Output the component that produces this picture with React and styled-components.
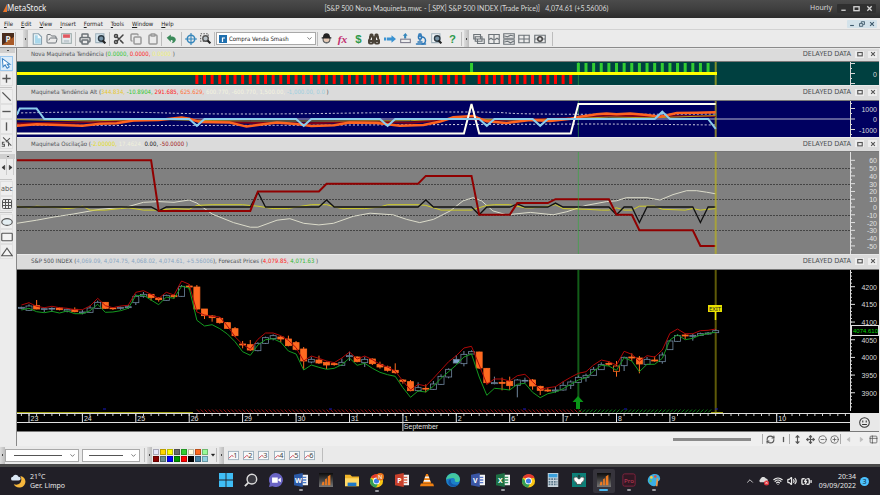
import React from "react";
import styled, { createGlobalStyle } from "styled-components";
import {
  Binoculars, ChevronDown, ChevronUp, Clipboard, Copy, FolderOpen, Grid3x3,
  Microscope, Move, MoveVertical, Printer, RefreshCw, Scissors,
  Volume2, Wifi, BatteryCharging, CirclePlus, CircleMinus, Table2,
} from "lucide-react";

/* ---------- data ---------- */

const STEP = 7.63;
const bx = (i) => 12 + i * STEP;
const range = (from, to) => Array.from({ length: to - from + 1 }, (_, k) => from + k);
const toPath = (pts, y) =>
  pts.map(([i, v], k) => `${k ? "L" : "M"}${bx(i).toFixed(1)} ${y(v).toFixed(1)}`).join("");

const oscMain = [[-1.6, 60], [16, 60], [17, -5], [29, -5], [30, 20], [38, 20], [39, 30], [51, 30], [52, 40], [58, 40], [59, -10], [63, -10], [64, 5], [68, 5], [69, 10], [76, 10], [77, -10], [79, -10], [80, -30], [87, -30], [88, -50], [90, -50]];
const oscBlack = [[-1.6, 0], [16, 0], [17, -5], [18, 0], [29, 0], [30, 19], [31, 0], [38, 0], [39, 9], [40, 0], [51, 0], [52, 9], [53, 0], [58, 0], [59, -10], [60, 0], [63, 0], [64, 4], [65, 0], [68, 0], [69, 5], [70, 0], [76, 0], [77, -10], [78, 0], [79, 0], [80, -20], [81, 0], [87, 0], [88, -20], [89, 0], [90, 0]];
const oscYellow = [[-1.6, 1], [0, -1], [1, 1], [4, -1], [5, -2], [6, -1], [7, 1], [8, -4], [10, -4], [12, -2], [13, -1], [15, -4], [17, -4], [19, -2], [21, -3], [22, 2], [24, 3], [28, 3], [30, 1], [32, -2], [34, -2], [35, 0], [37, 3], [39, 3], [41, -2], [44, -2], [46, 0], [47, 3], [51, 3], [52, 2], [54, -4], [58, -4], [60, 2], [61, 3], [63, 3], [65, -1], [66, -1], [68, 1], [69, 3], [70, -2], [73, -3], [75, -4], [76, -4], [77, -1], [78, -4], [79, -4], [80, 1], [82, 1], [83, -3], [86, -4], [87, -2], [88, -4], [90, -2]];
const oscPale = [[-1.6, -21], [1, -17], [3.2, -13], [5.8, -9], [9.3, -3], [12.8, 0], [15, 6], [17, 7], [19, 6], [21, 9], [22, 5], [24, -9], [26.8, -20], [29, -26], [30, -26], [32.5, -17], [34.2, -15], [36, -21], [38, -23], [39.9, -21], [42.5, -12], [44.7, -8], [47.7, -10], [49.5, -16], [51.2, -20], [53, -16], [55.2, -5], [56.9, 8], [58.2, 12], [59.3, 8], [60.8, -5], [62.6, -10], [65.7, -7], [68.7, -10], [70.5, -6], [73, 2], [75.7, 7], [77, 8], [78.3, 12], [81, 12], [82.7, 9], [84.4, 16], [86.2, 21], [87.5, 21], [88.8, 19], [90, 17]];

const altWhite = [[-1.6, -1400], [57, -1400], [58, 1450], [59, -1400], [71, -1400], [72, 1450], [90, 1450]];
const altCyan = [[-1.6, 400], [-1.2, 1000], [1, 1000], [2, 0], [21, 0], [22, -650], [23, 0], [35, 0], [36, -650], [37, 0], [46, 0], [47, -650], [48, 0], [59, 0], [60, -650], [61, 0], [66, 0], [67, -650], [68, 0], [82, 0], [83, 700], [84, 0], [89, 0], [90, -950]];
const altOrange = [[-1.6, -650], [1, -500], [5, -600], [7, -640], [9.3, -450], [11.5, -400], [13.7, -150], [17, -100], [20, 150], [21, 30], [22.4, -300], [26.3, -350], [28.5, -730], [30.7, -500], [32.5, -350], [35, -480], [37, -680], [40, -600], [42, -350], [45.6, -380], [48.6, -640], [51.7, -570], [53.9, -250], [55.6, 160], [58.2, 290], [60, -220], [62.6, -380], [65.7, -100], [68.3, -190], [71, 30], [72.2, 220], [74.4, 450], [75.7, 540], [77, 460], [78.8, 540], [81, 380], [82.7, 220], [84.9, 570], [87.5, 600], [90, 640]];
const altMaroon = [[-1.6, -420], [6, -330], [12, -200], [20, 60], [23, -180], [28, -350], [36, -420], [44, -220], [50, -370], [56, 60], [60, -100], [66, -50], [72, 100], [76, 320], [80, 300], [85, 260], [90, 280]];
const altOlive = [[-1.6, -60], [8, -180], [16, -30], [24, -160], [29, -190], [40, -190], [50, -160], [56, 40], [64, -100], [70, 20], [76, 180], [82, 120], [90, 330]];

// [bar, top, bottom, high, low] on a grid of thirds of a pixel; "u" hollow, "d" filled, "b" blue filled, "o" orange hollow
const candles = [
  [-1, 157, 160, 155, 163, "u"], [0, 153, 166, 148, 168, "u"], [1, 152, 162, 135, 163, "d"], [2, 161, 163, 158, 171, "u"], [3, 160, 162, 157, 171, "u"],
  [4, 159, 164, 157, 166, "d"], [5, 163, 168, 160, 172, "u"], [6, 163, 170, 157, 172, "d"], [7, 171, 174, 165, 178, "u"], [8, 159, 172, 152, 173, "u"],
  [9, 142, 160, 137, 161, "u"], [10, 142, 160, 141, 162, "d"], [11, 159, 161, 156, 165, "d"], [12, 157, 160, 155, 164, "u"], [13, 155, 158, 150, 162, "u"],
  [14, 124, 143, 118, 150, "u"], [15, 118, 124, 111, 128, "u"], [16, 118, 128, 117, 137, "d"], [17, 129, 134, 127, 140, "d"], [18, 121, 136, 119, 137, "u"],
  [19, 122, 125, 118, 131, "d"], [20, 94, 124, 90, 125, "u"], [21, 93, 96, 88, 104, "d"], [22, 96, 162, 90, 166, "d"], [23, 162, 182, 162, 192, "d"],
  [24, 183, 188, 180, 200, "d"], [25, 190, 203, 186, 206, "d"], [26, 203, 220, 201, 222, "d"], [27, 221, 242, 216, 246, "d"], [28, 267, 270, 258, 280, "d"],
  [29, 269, 285, 255, 288, "d"], [30, 265, 287, 262, 289, "u"], [31, 248, 265, 245, 267, "u"], [32, 242, 251, 238, 256, "u"], [33, 246, 252, 243, 262, "d"],
  [34, 252, 272, 242, 274, "d"], [35, 263, 283, 258, 286, "d"], [36, 282, 318, 276, 345, "d"], [37, 313, 321, 305, 325, "u"], [38, 315, 324, 302, 327, "d"],
  [39, 322, 330, 320, 342, "d"], [40, 326, 329, 322, 332, "d"], [41, 322, 331, 310, 333, "u"], [42, 302, 305, 290, 318, "u"], [43, 306, 320, 304, 322, "d"],
  [44, 313, 323, 305, 336, "u"], [45, 312, 326, 310, 330, "d"], [46, 328, 336, 320, 341, "d"], [47, 336, 346, 332, 350, "d"], [48, 346, 353, 325, 356, "d"],
  [49, 375, 379, 372, 386, "d"], [50, 380, 407, 375, 409, "d"], [51, 398, 407, 382, 410, "u"], [52, 400, 402, 388, 412, "d"], [53, 387, 403, 378, 405, "u"],
  [54, 364, 388, 358, 390, "u"], [55, 343, 366, 340, 370, "u"], [56, 313, 324, 300, 325, "b"], [57, 298, 326, 288, 334, "u"], [58, 290, 297, 286, 298, "u"],
  [59, 291, 339, 290, 342, "d"], [60, 340, 383, 339, 388, "d"], [61, 383, 386, 365, 388, "u"], [62, 382, 385, 368, 406, "d"], [63, 379, 392, 365, 405, "d"],
  [64, 375, 391, 372, 427, "u"], [65, 376, 378, 368, 385, "u"], [66, 375, 393, 372, 404, "d"], [67, 394, 406, 392, 420, "d"], [68, 405, 408, 398, 411, "d"],
  [69, 405, 408, 395, 413, "u"], [70, 391, 405, 380, 407, "u"], [71, 381, 391, 376, 402, "u"], [72, 367, 382, 362, 384, "u"], [73, 361, 367, 356, 380, "u"],
  [74, 343, 361, 336, 362, "u"], [75, 329, 344, 322, 345, "u"], [76, 325, 328, 318, 333, "d"], [77, 333, 349, 318, 365, "o"], [78, 307, 332, 305, 348, "u"],
  [79, 306, 309, 295, 318, "d"], [80, 309, 327, 303, 355, "d"], [81, 313, 328, 306, 330, "u"], [82, 315, 318, 304, 320, "d"], [83, 300, 320, 292, 326, "u"],
  [84, 258, 284, 255, 285, "u"], [85, 242, 259, 238, 260, "u"], [86, 240, 243, 236, 252, "d"], [87, 241, 244, 236, 257, "u"], [88, 236, 241, 233, 243, "u"],
  [89, 234, 237, 231, 239, "u"], [90, 227, 233, 222, 234, "u"],
];
// one value per bar, from bar -1 to bar 90
const highBand = [150, 143, 154, 158, 154, 158, 160, 164, 164, 153, 130, 152, 158, 153, 151, 112, 107, 118, 130, 112, 120, 78, 88, 171, 180, 184, 186, 213, 245, 268, 283, 253, 234, 234, 242, 256, 278, 318, 303, 310, 318, 323, 309, 291, 312, 303, 314, 328, 336, 348, 378, 405, 388, 393, 370, 345, 320, 302, 279, 274, 330, 388, 372, 372, 378, 362, 358, 380, 403, 398, 395, 380, 367, 355, 350, 330, 315, 320, 330, 289, 298, 318, 302, 306, 285, 235, 222, 236, 236, 227, 226, 222];
const lowBand = [165, 160, 170, 173, 169, 174, 168, 176, 176, 167, 148, 172, 171, 167, 160, 122, 121, 135, 149, 126, 130, 94, 99, 196, 213, 209, 221, 237, 260, 290, 301, 270, 254, 251, 262, 288, 297, 345, 330, 337, 343, 340, 329, 309, 331, 325, 340, 352, 359, 364, 398, 427, 408, 411, 394, 370, 350, 330, 306, 297, 366, 421, 400, 402, 405, 388, 385, 412, 428, 416, 411, 401, 388, 375, 368, 349, 331, 333, 346, 308, 318, 350, 328, 328, 310, 255, 239, 254, 250, 240, 236, 231];

const days = [[0, "23"], [7, "24"], [14, "25"], [21, "26"], [28, "29"], [35, "30"], [42, "31"], [49, "1"], [56, "2"], [63, "6"], [70, "7"], [77, "8"], [84, "9"], [98, "10"]];
const swatches = ["#e6e6fa", "#ffd700", "#ffff00", "#696969", "#32cd32", "#fffde0", "#ff6a1e", "#98fb98", "#8b0000", "#6b8e8e", "#0000ff", "#009900", "#ff0000", "#000000", "#4682a4", "#8fd0e0"];

/* ---------- styles ---------- */

const compact = `
  font-family: "DejaVu Sans Condensed", "DejaVu Sans", sans-serif;
  font-size: 6px;
`;

const GlobalStyle = createGlobalStyle`
  * { box-sizing: border-box; }
  body {
    margin: 0;
    background: #211f27;
    font-family: "Noto Sans", "Open Sans", sans-serif;
    font-size: 7px;
    line-height: 10px;
    color: #222;
  }
  button, select { font: inherit; color: inherit; margin: 0; }
  button { padding: 0; border: 0; background: none; }
  svg { display: block; flex: none; }
`;

const Page = styled.div`
  min-height: 100vh;
  display: flex;
  flex-direction: column;
  background: #ebebeb;
`;

const TitleBar = styled.header`
  height: 18px;
  padding: 0 4px 2px 3px;
  display: grid;
  grid-template-columns: 1fr auto 1fr;
  align-items: center;
  background: linear-gradient(#4b4b4b, #3f3f3f 50%, #2b2b2b);
  color: #d8d8d8;
`;

const Brand = styled.h1`
  margin: 0;
  display: flex;
  align-items: center;
  font-size: 8px;
  font-weight: 400;
  color: #efefef;
`;

const DocTitle = styled.span`
  padding-left: 54px;
  white-space: pre;
  font-family: Lato, sans-serif;
`;

const TitleRight = styled.div`
  display: flex;
  justify-content: flex-end;
  align-items: center;
  gap: 5px;
`;

const WinButtons = styled.div`
  display: flex;
  background: ${(p) => (p.$light ? "#d3e2ea" : "#303030")};
  color: ${(p) => (p.$light ? "#3f5a6c" : "#d6d6d6")};
  border-radius: 1px;
`;

const WinButton = styled.button`
  width: ${(p) => (p.$small ? 10 : 13)}px;
  height: ${(p) => (p.$small ? 8 : 9)}px;
  display: grid;
  place-items: center;
`;

const MenuBar = styled.nav`
  height: 12px;
  padding: 0 3px 0 4px;
  display: flex;
  align-items: center;
  gap: 8px;
  border-bottom: 1px solid #d2d2d2;
  color: #222;
  ${compact}
`;

const MenuItem = styled.button`
  &::first-letter { text-decoration: underline; }
`;

const Grow = styled.div`
  flex: 1;
`;

const Toolbar = styled.div`
  height: 18px;
  display: flex;
  align-items: center;
  border-bottom: 1px solid #8b8b8b;
`;

const Group = styled.div`
  width: ${(p) => p.$w}px;
  height: 14px;
  padding: 0 1px;
  display: flex;
  align-items: center;
  justify-content: ${(p) => (p.$center ? "center" : "space-between")};
  border-left: 1px solid ${(p) => (p.$bare ? "transparent" : "#bdbdbd")};
`;

const Grip = styled.div`
  width: 5px;
  height: 17px;
  background: linear-gradient(90deg, #dcdcdc, #bcbcbc);
  display: grid;
  place-items: center;
  &::after { content: ""; width: 1px; height: 2px; background: #444; }
`;

const ToolButton = styled.button`
  width: 15px;
  height: 14px;
  display: grid;
  place-items: center;
  color: ${(p) => p.$color || "#6c7378"};
`;

const SelectBox = styled.label`
  width: ${(p) => p.$w}px;
  height: 13px;
  display: grid;
  align-items: center;
  background: #fff;
  border: 1px solid #a9a9a9;
  color: #222;
  ${compact}
  > * { grid-area: 1 / 1; }
  > svg { pointer-events: none; margin-left: 2px; }
  > svg:last-child { justify-self: end; margin: 0 2px; }
`;

const Select = styled.select`
  width: 100%;
  height: 11px;
  padding: 0 0 0 ${(p) => p.$pad || 2}px;
  border: 0;
  background: transparent;
  appearance: none;
  line-height: 11px;
`;

const Workspace = styled.div`
  display: flex;
  flex: 1;
`;

const SideBar = styled.aside`
  width: 17px;
  flex: none;
  display: flex;
  flex-direction: column;
  align-items: flex-start;
  border-right: 1px solid #888;
  background: #ececec;
`;

const SideTool = styled.button`
  width: 13px;
  height: 15px;
  border: 1px solid ${(p) => (p.$active ? "#9cc8ee" : "#e0e0e0")};
  background: ${(p) => (p.$active ? "#dcecfa" : "#efefef")};
  display: grid;
  place-items: center;
  color: #555;
`;

const SideGrip = styled.div`
  width: 15px;
  height: 5px;
  margin-bottom: ${(p) => p.$gap || 0}px;
  background: #cfcfcf;
  display: grid;
  place-items: center;
  &::after { content: ""; width: 2px; height: 1px; background: #555; }
`;

const SideRule = styled.div`
  width: 12px;
  height: 1px;
  margin: ${(p) => p.$m}px 0;
  background: #c4c4c4;
`;

const Arrows = styled.div`
  display: flex;
  height: 16px;
  margin-bottom: 3px;
  button { width: 7px; display: grid; place-items: center; border-right: 1px solid #ccc; }
`;

const Main = styled.main`
  flex: 1;
  min-width: 0;
  padding-right: 1px;
`;

const PaneHead = styled.div`
  height: ${(p) => p.$h}px;
  padding: 0 2px 2px 14px;
  display: flex;
  align-items: center;
  background: #dbdbdb;
  border-bottom: 1px solid #777;
  border-top: 1px solid #e8e8e8;
  color: #4c5054;
`;

const PaneTitle = styled.h2`
  flex: 1;
  margin: 0;
  font-weight: 400;
  white-space: pre;
  ${compact}
`;

const Value = styled.span`
  color: ${(p) => p.$c};
`;

const Delayed = styled.span`
  margin-right: 4px;
`;

const PaneButton = styled.button`
  width: 9px;
  height: 7px;
  margin-left: ${(p) => (p.$gap ? 4 : 0)}px;
  display: grid;
  place-items: center;
  background: #ededed;
  color: #555;
`;

const PlotRow = styled.div`
  display: flex;
  background: ${(p) => p.$bg};
`;

const Plot = styled.svg`
  flex: 1;
  min-width: 0;
  width: 0;
  height: ${(p) => p.$h}px;
`;

const Axis = styled.svg`
  width: 29px;
  height: ${(p) => p.$h}px;
  font-family: "Liberation Sans", Arial, sans-serif;
  font-size: 7px;
`;

const Mood = styled.button`
  width: 29px;
  height: 18px;
  display: grid;
  place-items: center;
  background: #e8e8e8;
  color: #333;
`;

const ScrollStrip = styled.div`
  height: 15px;
  display: flex;
  align-items: center;
  justify-content: flex-end;
  background: #efefef;
  border-top: 1px solid #7a7a7a;
`;

const Thumb = styled.div`
  width: 78px;
  height: 3px;
  margin-right: 11px;
  background: #8b8b8b;
`;

const NavButton = styled.button`
  width: ${(p) => (p.$rule ? 15 : 12)}px;
  height: 10px;
  display: grid;
  place-items: center;
  color: ${(p) => (p.$off ? "#bbb" : "#555")};
  border-left: 1px solid ${(p) => (p.$rule ? "#aaa" : "transparent")};
`;

const DrawBar = styled.div`
  height: 18px;
  display: flex;
  align-items: center;
  background: #eaeaea;
`;

const Palette = styled.div`
  display: grid;
  grid-template-columns: repeat(8, 6px);
  grid-auto-rows: 6px;
  gap: 1px;
  margin-left: 1px;
`;

const Swatch = styled.button`
  background: ${(p) => p.$c};
  border: 1px solid #00000044;
`;

const TaskBar = styled.footer`
  height: 31px;
  display: flex;
  align-items: center;
  background: #211f27;
  border-top: 3px solid #4a4a4a;
  color: #e8e8e8;
`;

const Weather = styled.div`
  flex: 1;
  padding-left: 11px;
  display: flex;
  align-items: center;
  gap: 4px;
`;

const WeatherText = styled.p`
  margin: 0;
  line-height: 9px;
`;

const Apps = styled.div`
  width: 454px;
  display: flex;
  justify-content: space-around;
`;

const AppButton = styled.button`
  width: 22px;
  height: 24px;
  padding-top: 2px;
  display: flex;
  flex-direction: column;
  align-items: center;
  justify-content: center;
  gap: 2px;
  border-radius: 2px;
  background: ${(p) => (p.$active ? "#36343c" : "none")};
  &::after {
    content: "";
    width: ${(p) => (p.$active ? 9 : 4)}px;
    height: 2px;
    border-radius: 1px;
    background: ${(p) => (p.$active ? "#4cb8f0" : p.$open ? "#9a9aa0" : "transparent")};
  }
`;

const Tray = styled.div`
  flex: 1;
  padding-right: 11px;
  display: flex;
  align-items: center;
  justify-content: flex-end;
  gap: 4px;
`;

const Clock = styled.time`
  margin-left: 3px;
  text-align: right;
  line-height: 9px;
`;

const Badge = styled.span`
  width: 9px;
  height: 9px;
  border-radius: 50%;
  background: #4cc2ff;
  color: #10242f;
  text-align: center;
  line-height: 9px;
`;

/* ---------- small drawings ---------- */

const Ic = ({ s = 11, w = s, children }) => (
  <svg width={w} height={s} viewBox="0 0 16 16" fill="none" stroke="currentColor" strokeWidth="1.5" aria-hidden="true">
    {children}
  </svg>
);

const winGlyph = {
  Minimize: <path d="M3 12h10" strokeWidth="3" />,
  Maximize: <rect x="2" y="4" width="12" height="9" strokeWidth="3" />,
  Restore: <path d="M6 6V2h9v7h-4M1 7h9v7H1z" strokeWidth="2.5" />,
  Close: <path d="M3 3l10 10M13 3L3 13" strokeWidth="3" />,
};

const PaperIcon = ({ tone }) => (
  <Ic s={12}>
    <path d="M3 1h7l4 4v10H3z" fill="#f6fbfd" stroke="#8aa2b0" />
    <path d="M5 3h4v4h4v7H5z" fill={tone} stroke="none" />
  </Ic>
);

const FloppyIcon = () => (
  <Ic>
    <rect x="1" y="1" width="14" height="14" fill="#e9edf0" stroke="#9aa" />
    <path d="M3 2h10v5H3z" fill="#e25860" stroke="none" />
    <path d="M4 10h8v4H4z" fill="#c3ccd2" stroke="none" />
  </Ic>
);

const FindPageIcon = ({ bg }) => (
  <Ic>
    <path d="M1 1h12v13H1z" fill={bg} stroke="#9fb0ba" />
    <circle cx="9" cy="8" r="4" fill="#7592a5" stroke="#2d3a44" strokeWidth="2" />
    <path d="M11 11l4 4" stroke="#222" strokeWidth="3" />
  </Ic>
);

const UndoIcon = () => (
  <Ic>
    <path d="M1 7l6-5v3c6 0 8 3 7 6-1 2-3 4-6 4 2-2 3-5-1-5v3z" fill="#3b8a5a" stroke="none" />
  </Ic>
);

const TargetIcon = () => (
  <Ic s={12}>
    <circle cx="8" cy="8" r="5" stroke="#3586bb" strokeWidth="2" />
    <path d="M8 0v16M0 8h16" stroke="#3586bb" />
  </Ic>
);

const ZoomBoxIcon = () => (
  <Ic>
    <path d="M1 1h11v11H1z" strokeDasharray="2 2" stroke="#555" />
    <circle cx="8" cy="8" r="4" fill="#b8c2c8" stroke="#555" strokeWidth="2" />
    <path d="M11 11l4 4" stroke="#222" strokeWidth="3" />
  </Ic>
);

const AdvisorIcon = () => (
  <Ic>
    <circle cx="8" cy="9" r="5" fill="#e4c9b4" stroke="#555" />
    <path d="M1 7h14M4 6c0-6 8-6 8 0z" fill="#222" stroke="#222" strokeWidth="2" />
    <path d="M5 13q3 3 6 0" fill="#555" />
  </Ic>
);

const GlyphIcon = ({ children, color, italic }) => (
  <Ic s={13}>
    <text x="8" y="13" textAnchor="middle" fontSize="14" fontWeight="700" fontStyle={italic ? "italic" : "normal"} fontFamily={italic ? "Liberation Serif, serif" : "Liberation Sans, sans-serif"} fill={color} stroke="none">
      {children}
    </text>
  </Ic>
);

const ArrowIcon = () => (
  <Ic s={12}>
    <path d="M0 6h3v4H0zM4 6h6V3l6 5-6 5v-3H4z" fill="#3b93d2" stroke="none" />
  </Ic>
);

const DownloadIcon = () => (
  <Ic>
    <path d="M6 8V4H4l4-4 3 4H9v4z" fill="#3586bb" stroke="none" />
    <rect x="1" y="9" width="14" height="5" fill="#eee" stroke="#778" />
  </Ic>
);

const LayoutIcon = ({ kind }) => (
  <Ic s={12}>
    {kind === 0 && <path d="M1 2h9v6H1zM3 5h9v6H3zM6 8h9v6H6z" fill="#e8e8e8" />}
    {kind === 1 && <path d="M1 2h14v12H1zM8 2v12M1 9l3-2 3 2M9 9l3-2 3 2" />}
    {kind === 2 && <path d="M1 1h14v6H1zM1 9h14v6H1zM2 4l4 1 4-2 4 1M2 12l4-1 4 2 4-2" />}
    {kind === 3 && <path d="M1 3h14v10H1zM8 3v10M1 8h14" />}
    {kind === 4 && (
      <>
        <path d="M1 3h14v10H1zM1 8h14" />
        <circle cx="8" cy="8" r="3" fill="#ddd" stroke="#444" strokeWidth="2" />
      </>
    )}
  </Ic>
);

const BarsLogo = () => (
  <svg width="14" height="14" viewBox="0 0 16 16" aria-hidden="true">
    <defs>
      <linearGradient id="steel" x2="0" y2="1">
        <stop offset="0" stopColor="#0c0c0c" />
        <stop offset="1" stopColor="#777" />
      </linearGradient>
    </defs>
    <rect width="16" height="16" fill="url(#steel)" />
    <path d="M3 14l1-4h2v4zM7 14V7l2-1v8zM10 14V4l3-2v12z" fill="#f07c22" />
  </svg>
);

const OfficeIcon = ({ color, light, letter }) => (
  <svg width="14" height="14" viewBox="0 0 16 16" aria-hidden="true">
    <path d="M8 2h8v12H8z" fill="#f3f3f3" />
    <path d="M10 5h4M10 8h4M10 11h4" stroke={light} strokeWidth="1.6" />
    <path d="M0 2l10-2v16L0 14z" fill={color} />
    <text x="5" y="11" textAnchor="middle" fontSize="8" fontWeight="700" fill="#fff">{letter}</text>
  </svg>
);

const ChromeIcon = ({ badge }) => (
  <svg width="15" height="15" viewBox="0 0 16 16" aria-hidden="true">
    <circle cx="8" cy="8.5" r="7" fill="#f9c513" />
    <path d="M2 5A7 7 0 0 1 14.5 5L8 6z" fill="#e33b2e" />
    <path d="M1.8 5.2A7 7 0 0 0 7.5 15.5L10 11 6 10z" fill="#35a153" />
    <circle cx="8" cy="8.5" r="3.6" fill="#fff" />
    <circle cx="8" cy="8.5" r="2.7" fill="#3b7de8" />
    {badge && <circle cx="12" cy="4" r="4" fill="#e8721c" />}
    {badge && <text x="12" y="6" fontSize="6" textAnchor="middle" fill="#fff">N</text>}
  </svg>
);

const Sq = ({ children }) => (
  <svg width="14" height="14" viewBox="0 0 16 16" aria-hidden="true">{children}</svg>
);

const apps = [
  ["Start", <Sq><path d="M0 0h7.5v7.5H0zM8.5 0H16v7.5H8.5zM0 8.5h7.5V16H0zM8.5 8.5H16V16H8.5z" fill="#3fbdf5" /></Sq>],
  ["Search", <Sq><circle cx="9" cy="7" r="5.5" fill="#3a3940" stroke="#ddd" strokeWidth="1.6" /><path d="M5 11l-4 4" stroke="#ddd" strokeWidth="2" /></Sq>],
  ["Chat", <Sq><path d="M8 0a8 8 0 1 1-4 15l-4 1 1-4A8 8 0 0 1 8 0z" fill="#6a64c4" /><path d="M3.5 5H10v6H3.5zM10.5 7.5l3-2v5l-3-2z" fill="#fff" /></Sq>],
  ["Word", <OfficeIcon color="#2c5aa8" light="#4a7ccc" letter="W" />, "open"],
  ["MetaStock", <BarsLogo />],
  ["Files", <Sq><path d="M0 2h6l2 2h8v11H0z" fill="#f0b429" /><path d="M0 6h16v9H0z" fill="#ffd866" /><path d="M3 11h10v4H3z" fill="#1d78c8" /></Sq>],
  ["Chrome N", <ChromeIcon badge />, "open"],
  ["PowerPoint", <OfficeIcon color="#c8402c" light="#d86a50" letter="P" />],
  ["VLC", <Sq><path d="M7 1h2l4 11H3z" fill="#f08010" /><path d="M6 4h4l.7 2H5.3zM4.7 8h6.6l.7 2H4z" fill="#f3f3f3" /><path d="M1 12h14l1 3H0z" fill="#f08010" /></Sq>],
  ["Edge", <Sq><circle cx="8" cy="8" r="8" fill="#1b7fc9" /><path d="M0 8C1-2 15-2 16 7c0 4-5 4-6 2 1-3-2-4-4-3-3 0-5 1-6 2z" fill="#43c8a0" /><path d="M6 7c-2 4 2 8 8 6-6 6-13 0-11-4 0-1 1-2 3-2z" fill="#1557a8" /></Sq>],
  ["Visio", <OfficeIcon color="#3a55a4" light="#5a78cc" letter="V" />],
  ["Excel", <OfficeIcon color="#1e7145" light="#3a9a66" letter="X" />, "open"],
  ["Chrome", <ChromeIcon />],
  ["Calculator", <Sq><path d="M2 0h12v16H2z" fill="#c9d4dc" /><path d="M3 1h10v4H3z" fill="#3aa0dc" /><path d="M3 7h10M3 10h10M3 13h10" stroke="#5a7688" strokeWidth="2" strokeDasharray="2 1" /></Sq>],
  ["Chess", <Sq><path d="M0 0h16v16H0z" fill="#0d8078" /><path d="M2 5q3-2 6 2 3-4 6-2 1 4-3 6v2H5v-2Q1 9 2 5z" fill="#fff" stroke="#222" strokeWidth=".8" /><path d="M8 2v4M6.5 3.5h3" stroke="#222" /></Sq>],
  ["MetaStock window", <BarsLogo />, "active"],
  ["Pro", <Sq><rect x="1" y="1" width="14" height="14" rx="2" fill="#301823" stroke="#8a2440" /><text x="8" y="11" fontSize="7" textAnchor="middle" fill="#c83a5a">Pro</text></Sq>, "open"],
  ["Paint", <Sq><path d="M1 7C3 0 14-1 15 6c0 3-2 3-3 4s0 5-4 5S0 11 1 7z" fill="#3aaee4" /><circle cx="5" cy="5" r="1.6" fill="#f6d040" /><circle cx="9.5" cy="4" r="1.5" fill="#e25040" /><circle cx="4" cy="9" r="1.5" fill="#60c060" /><path d="M11 6l2 0-1 9h-2z" fill="#e8964a" /></Sq>, "open"],
];

/* ---------- parts ---------- */

function Head({ h, title, values }) {
  return (
    <PaneHead $h={h}>
      <PaneTitle>
        {title}
        {values.map(([text, color], i) => (
          <Value key={i} $c={color}>{text}</Value>
        ))}
        {" )"}
      </PaneTitle>
      <Delayed>DELAYED DATA</Delayed>
      <PaneButton aria-label="Maximize pane"><Ic s={6}>{winGlyph.Maximize}</Ic></PaneButton>
      <PaneButton $gap aria-label="Close pane"><Ic s={6}>{winGlyph.Close}</Ic></PaneButton>
    </PaneHead>
  );
}

function Scale({ h, color = "#d8d8d8", major, minor, labels, children }) {
  return (
    <Axis $h={h}>
      <path d={`M.5 0V${h}`} stroke={color} />
      <path d={minor.map((y) => `M0 ${y}h2`).join("")} stroke={color} />
      <path d={major.map((y) => `M0 ${y}h5`).join("")} stroke={color} />
      {labels.map(([y, text]) => (
        <text key={text} x="27" y={y + 2.5} textAnchor="end" fill={color}>{text}</text>
      ))}
      {children}
    </Axis>
  );
}

const Markers = () => (
  <>
    <path d={`M${bx(72)} 0V200`} stroke="#2fae3a" strokeOpacity=".6" />
    <path d={`M${bx(90)} 0V200`} stroke="#b8b020" strokeOpacity=".7" strokeWidth="2" />
  </>
);

function TrendPane() {
  return (
    <section>
      <Head h={14} title="Nova Maquineta Tendência (" values={[["0.0000, ", "#32c832"], ["0.0000, ", "#f22"], ["0.0000", "#f2f27a"]]} />
      <PlotRow $bg="#004040">
        <Plot $h={23}>
          <Markers />
          {range(22, 71).filter((i) => i !== 58).map((i) => (
            <rect key={i} x={bx(i) - 1.5} y="13" width="3" height="9" fill="#f00" />
          ))}
          {[58, ...range(72, 89)].map((i) => (
            <rect key={i} x={bx(i) - 1.5} y="1" width="3" height="9" fill="#32cd32" />
          ))}
          <path d="M0 11.5H700" stroke="#ff0" strokeWidth="3" />
        </Plot>
        <Scale h={23} major={[1.5, 11.5, 21.5]} minor={[6.5, 16.5]} labels={[[12, "0"]]} />
      </PlotRow>
    </section>
  );
}

function AltPane() {
  const y = (v) => 18 - v * 0.0104;
  const cream = "#f4f4e0";
  return (
    <section>
      <Head
        h={16}
        title="Maquineta Tendência Alt ("
        values={[["344.834, ", "#e8c830"], ["-10.8904, ", "#32c832"], ["291.685, ", "#f22"], ["625.629, ", "#ff7038"], ["600.770, -600.770, 1,500.00, ", cream], ["-1,000.00, 0.0", "#9ccfdf"]]}
      />
      <PlotRow $bg="#000060">
        <Plot $h={36}>
          <line x1="0" x2="100%" y1="18" y2="18" stroke="#b8b8d0" />
          <Markers />
          <path d="M0 12q90-2 150 0t190 0 150 0 210 1M0 24q120 1 340 0t240-1 120 1" fill="none" stroke="#dcdce8" strokeDasharray="2 2" />
          <path d={toPath(altMaroon, y)} fill="none" stroke="#800018" strokeWidth="2" />
          <path d={toPath(altOlive, y)} fill="none" stroke="#b0a020" />
          <path d={toPath(altOrange, y)} fill="none" stroke="#ff6420" strokeWidth="2.5" />
          <path d={toPath(altWhite, y)} fill="none" stroke="#fffff0" strokeWidth="2" />
          <path d={toPath(altCyan, y)} fill="none" stroke="#8ccdec" strokeWidth="2" />
        </Plot>
        <Scale h={36} major={[7.5, 18, 28.5]} minor={[2.5, 12.5, 23.5, 33.5]} labels={[[8, "1000"], [18, "0"], [29, "-1000"]]} />
      </PlotRow>
    </section>
  );
}

function OscPane() {
  const y = (v) => 55 - v * 0.778;
  const tens = range(-5, 6).map((n) => n * 10);
  return (
    <section>
      <Head h={15} title="Maquineta Oscilação (" values={[["-2.00000, ", "#e2dc20"], ["17.4624, ", "#f0f0dc"], ["0.00, ", "#111"], ["-50.0000", "#a01818"]]} />
      <PlotRow $bg="#808080">
        <Plot $h={102}>
          {[50, 30, 10, -10, -30].map((v) => (
            <line key={v} x1="0" x2="100%" y1={Math.round(y(v)) + 0.5} y2={Math.round(y(v)) + 0.5} stroke="#444" strokeDasharray="2 1" />
          ))}
          <path d={toPath(oscPale, y)} fill="none" stroke="#dcdccb" />
          <path d={toPath(oscYellow, y)} fill="none" stroke="#cfcc28" />
          <path d={toPath(oscBlack, y)} fill="none" stroke="#111" strokeWidth="1.3" />
          <path d={toPath(oscMain, y)} fill="none" stroke="#900000" strokeWidth="2" />
          <Markers />
        </Plot>
        <Scale
          h={102}
          color="#e0e0e0"
          major={tens.map((v) => y(v))}
          minor={tens.map((v) => y(v - 5))}
          labels={tens.map((v) => [y(v) + 0.5, String(v)])}
        />
      </PlotRow>
    </section>
  );
}

function Candle({ bar }) {
  const [i, top, bottom, high, low, kind] = bar;
  const y = (v) => (v - 45) / 3;
  const x = bx(i);
  const color = kind === "d" || kind === "o" ? "#ff6a20" : "#7088a0";
  const fill = kind === "d" ? "#ff6a20" : kind === "b" ? "#7fa6cc" : "#000";
  return (
    <>
      <path d={`M${x} ${y(high)}V${y(low)}`} stroke={color} />
      <rect x={x - 3} y={y(top)} width="6" height={Math.max(0.8, y(bottom) - y(top))} fill={fill} stroke={color} strokeWidth=".8" />
    </>
  );
}

function PricePane() {
  const y = (v) => (v - 45) / 3;
  const py = (price) => 16.7 + (4200 - price) * 0.3535;
  const line = (arr) => toPath(arr.map((v, k) => [k - 1, v]), y);
  const prices = range(0, 6).map((n) => 4200 - n * 50);
  const hatch = (from, to, dx) =>
    range(0, (to - from) * 2).map((k) => {
      const x = bx(from) + k * (STEP / 2);
      return `M${x.toFixed(1)} ${dx > 0 ? 139.5 : 142.5}l3 ${dx * 3}`;
    }).join("");
  return (
    <section>
      <Head
        h={16}
        title="S&P 500 INDEX ("
        values={[["4,069.09, 4,074.75, 4,068.02, 4,074.61, +5.56006", "#8aa6c2"], ["), Forecast Prices (", "#4c5054"], ["4,079.85, ", "#f22"], ["4,071.63", "#32b832"]]}
      />
      <PlotRow $bg="#000">
        <Plot $h={143}>
          <path d={`M${bx(72)} 0V128`} stroke="#125c18" strokeWidth="2" />
          <path d={`M${bx(90)} 0V143`} stroke="#5e5a08" strokeWidth="2" />
          {candles.map((bar) => <Candle key={bar[0]} bar={bar} />)}
          <path d={line(highBand)} fill="none" stroke="#b00808" />
          <path d={line(lowBand)} fill="none" stroke="#149a20" />
          <path d="M0 142.5H176M694 142.5h12" stroke="#a0a018" />
          <path d={hatch(22, 72, 1)} stroke="#a01414" />
          <path d={hatch(72, 89, -1)} stroke="#108018" />
          <path d="M86 139h3M312 139h3M506 139h3M607 139h3M698 139h3" stroke="#1818c0" />
          <path d="M561 126l-5.5 6h3.5v7h4v-7h3.5z" fill="#0a9418" />
          <rect x="691" y="35" width="14" height="7" fill="#e8e000" />
          <text x="698" y="41" fontSize="6" textAnchor="middle" fill="#222">EXIT</text>
          <path d="M698.5 42v8" stroke="#f0e800" strokeWidth="1.5" />
        </Plot>
        <Scale
          h={141}
          major={prices.map(py)}
          minor={range(0, 38).map((n) => py(4240 - n * 10))}
          labels={prices.map((p) => [py(p) + 0.5, String(p)])}
        >
          <rect x="1.5" y="55.5" width="27" height="10" fill="#000" stroke="#ddd" />
          <text x="28" y="63" fontSize="6" textAnchor="end" fill="#00d800">4074.610</text>
        </Scale>
      </PlotRow>
      <PlotRow $bg="#000">
        <Plot $h={18} fontFamily="Liberation Sans, Arial, sans-serif" fontSize="7" fill="#e0e0e0">
          <line x1="0" x2="100%" y1=".5" y2=".5" stroke="#e0e0e0" />
          <line x1="0" x2="100%" y1="9.5" y2="9.5" stroke="#e0e0e0" />
          <path d={range(-1, 107).map((i) => `M${bx(i).toFixed(1)} 1v2`).join("")} stroke="#ccc" />
          {days.map(([i, label]) => (
            <g key={label}>
              <path d={`M${bx(i).toFixed(1)} 1V${label === "1" ? 18 : 10}`} stroke="#e0e0e0" />
              <text x={bx(i) + 1.5} y="8">{label}</text>
            </g>
          ))}
          <text x={bx(49) + 1} y="16">September</text>
        </Plot>
        <Mood aria-label="Market mood">
          <Ic s={11}>
            <circle cx="8" cy="8" r="7" />
            <path d="M4.5 11h7M5.5 5v3M10.5 5v3" strokeWidth="1.5" />
          </Ic>
        </Mood>
      </PlotRow>
    </section>
  );
}

function TopToolbar() {
  return (
    <Toolbar>
      <ToolButton aria-label="Power console">
        <svg width="12" height="12" viewBox="0 0 16 16">
          <rect width="16" height="16" fill="#4a2c1c" />
          <path d="M0 16L16 5v11z" fill="#a85a28" />
          <text x="8" y="12" fontSize="11" fontWeight="700" textAnchor="middle" fill="#eee">P</text>
        </svg>
      </ToolButton>
      <Group $w={8} />
      <Grip />
      <Group $w={47} $bare>
        <ToolButton aria-label="New"><PaperIcon tone="#a9d8ec" /></ToolButton>
        <ToolButton aria-label="Open"><FolderOpen size={12} /></ToolButton>
        <ToolButton aria-label="Save"><FloppyIcon /></ToolButton>
      </Group>
      <Group $w={34}>
        <ToolButton aria-label="Print"><Printer size={12} strokeWidth={3} /></ToolButton>
        <ToolButton aria-label="Print preview"><FindPageIcon bg="#d5e6ef" /></ToolButton>
      </Group>
      <Group $w={52}>
        <ToolButton $color="#444" aria-label="Cut"><Scissors size={12} strokeWidth={3} /></ToolButton>
        <ToolButton $color="#999" aria-label="Copy"><Copy size={12} strokeWidth={3} /></ToolButton>
        <ToolButton $color="#999" aria-label="Paste"><Clipboard size={12} strokeWidth={3} /></ToolButton>
      </Group>
      <Group $w={20} $center>
        <ToolButton aria-label="Undo"><UndoIcon /></ToolButton>
      </Group>
      <Group $w={33}>
        <ToolButton aria-label="Center"><TargetIcon /></ToolButton>
        <ToolButton aria-label="Zoom box"><ZoomBoxIcon /></ToolButton>
      </Group>
      <Group $w={103}>
        <SelectBox $w={100}>
          <Select $pad={12} aria-label="Template">
            <option>Compra Venda Smash</option>
          </Select>
          <svg width="8" height="8" viewBox="0 0 8 8">
            <rect width="8" height="8" fill="#1f6fae" />
            <path d="M3.5 7V3H6" stroke="#fff" fill="none" strokeWidth="1.2" />
          </svg>
          <ChevronDown size={7} />
        </SelectBox>
      </Group>
      <Group $w={144}>
        <ToolButton aria-label="Advisor"><AdvisorIcon /></ToolButton>
        <ToolButton aria-label="Indicator builder"><GlyphIcon color="#c22e6e" italic>fx</GlyphIcon></ToolButton>
        <ToolButton aria-label="System tester"><GlyphIcon color="#2f9a4c">$</GlyphIcon></ToolButton>
        <ToolButton $color="#4a4238" aria-label="Explorer"><Binoculars size={12} strokeWidth={4} /></ToolButton>
        <ToolButton aria-label="Forward"><ArrowIcon /></ToolButton>
        <ToolButton aria-label="Downloader"><DownloadIcon /></ToolButton>
        <ToolButton $color="#2d78b8" aria-label="Optimizer"><Microscope size={12} strokeWidth={3} /></ToolButton>
        <ToolButton aria-label="Data window"><FindPageIcon bg="#f2f6f8" /></ToolButton>
        <ToolButton aria-label="Help"><GlyphIcon color="#2f9a4c">?</GlyphIcon></ToolButton>
      </Group>
      <Group $w={3} />
      <Grip />
      <Group $w={79} $bare>
        {[0, 1, 2, 3, 4].map((k) => (
          <ToolButton key={k} aria-label={`Layout ${k + 1}`}><LayoutIcon kind={k} /></ToolButton>
        ))}
      </Group>
      <Group $w={4} $bare />
      <Group $w={4} />
    </Toolbar>
  );
}

function SideTools() {
  return (
    <SideBar>
      <SideGrip $gap={3} />
      <SideTool $active aria-label="Pointer">
        <Ic><path d="M2 1l1 12 3-3 3 5 3-2-3-4h4z" fill="#fff" stroke="#3b82c4" /></Ic>
      </SideTool>
      <SideTool aria-label="Crosshair"><Ic><path d="M8 2v12M2 8h12" strokeWidth="2" /></Ic></SideTool>
      <SideRule $m={1} />
      <SideTool aria-label="Trendline"><Ic><path d="M2 2l12 12" strokeWidth="2" /></Ic></SideTool>
      <SideTool aria-label="Horizontal line"><Ic><path d="M2 8h12" strokeWidth="2" /></Ic></SideTool>
      <SideTool aria-label="Vertical line"><Ic><path d="M8 2v12" strokeWidth="2" /></Ic></SideTool>
      <SideTool aria-label="Symbol">
        <Ic><path d="M3 2l12 12M13 3L7 9M5 9H2v3h3v3H1M11 8v7" /></Ic>
      </SideTool>
      <SideRule $m={2} />
      <SideGrip />
      <Arrows>
        <button aria-label="Previous"><Ic s={5}><path d="M12 1v14L3 8z" fill="#333" /></Ic></button>
        <button aria-label="Next"><Ic s={5}><path d="M4 1v14l9-7z" fill="#333" /></Ic></button>
      </Arrows>
      <SideRule $m={1} />
      <SideTool aria-label="Text">abc</SideTool>
      <SideTool aria-label="Grid"><Grid3x3 size={12} /></SideTool>
      <SideRule $m={1} />
      <SideTool aria-label="Ellipse"><Ic s={12}><ellipse cx="8" cy="8" rx="7" ry="4.5" fill="#e4eef2" /></Ic></SideTool>
      <SideTool aria-label="Rectangle"><Ic s={12}><rect x="1" y="3" width="14" height="10" rx="1" fill="#f4f4f4" /></Ic></SideTool>
      <SideTool aria-label="Triangle"><Ic s={12}><path d="M8 3l7 10H1z" fill="#f4f4f4" /></Ic></SideTool>
    </SideBar>
  );
}

function DrawingBar() {
  return (
    <DrawBar>
      <Grip />
      <SelectBox $w={74}>
        <Select aria-label="Line style" />
        <svg width="60" height="3"><path d="M6 1.5h48" stroke="#555" /></svg>
        <ChevronDown size={7} />
      </SelectBox>
      <Group $w={3} $bare />
      <SelectBox $w={58}>
        <Select aria-label="Line weight" />
        <svg width="44" height="3"><path d="M4 1.5h34" stroke="#555" /></svg>
        <ChevronDown size={7} />
      </SelectBox>
      <Group $w={4} $bare />
      <Group $w={3} />
      <Grip />
      <Palette>
        {swatches.map((c) => <Swatch key={c} $c={c} aria-label={c} />)}
      </Palette>
      <Group $w={8} $bare $center><Ic s={4}><path d="M1 4h14l-7 9z" fill="#222" /></Ic></Group>
      <Group $w={3} />
      <Grip />
      <Group $w={94} $bare>
        {["1", "2", "3", "4", "5", "6"].map((n) => (
          <ToolButton key={n} aria-label={`Template ${n}`}>
            <svg width="11" height="11" viewBox="0 0 12 12">
              <rect x=".5" y="1.5" width="11" height="9" fill="#f7f9fa" stroke="#9db0bc" />
              <path d="M1 9l3-3 2 1" stroke="#d04050" fill="none" />
              <text x="8" y="9" fontSize="8" textAnchor="middle" fill="#444">{n}</text>
            </svg>
          </ToolButton>
        ))}
      </Group>
      <Group $w={4} $bare />
      <Group $w={4} />
    </DrawBar>
  );
}

function Taskbar() {
  return (
    <TaskBar>
      <Weather>
        <svg width="15" height="15" viewBox="0 0 16 16" aria-hidden="true">
          <path d="M10 2c6 1 7 8 3 11-4 3-9 1-10-2 6 2 10-3 7-9z" fill="#f6b73c" />
          <path d="M2 7a2 2 0 0 1 0-4c1-3 5-3 6 0 3 0 3 4 0 4z" fill="#dce8f5" />
        </svg>
        <WeatherText>
          21°C<br />Ger. Limpo
        </WeatherText>
      </Weather>
      <Apps>
        {apps.map(([name, icon, state]) => (
          <AppButton key={name} aria-label={name} $active={state === "active"} $open={state === "open"}>{icon}</AppButton>
        ))}
      </Apps>
      <Tray>
        <ChevronUp size={10} />
        <svg width="10" height="10" viewBox="0 0 16 16" aria-hidden="true">
          <path d="M2 10a3 3 0 0 1 0-5c2-5 8-4 9-1 4 0 4 6 0 6z" fill="#ddd" />
          <circle cx="12" cy="11" r="4" fill="#e03038" />
          <path d="M10 9l4 4M14 9l-4 4" stroke="#fff" />
        </svg>
        <Wifi size={10} strokeWidth={3} />
        <Volume2 size={10} strokeWidth={3} />
        <BatteryCharging size={11} strokeWidth={3} />
        <Clock>20:34<br />09/09/2022</Clock>
        <Badge>3</Badge>
      </Tray>
    </TaskBar>
  );
}

export default function App() {
  return (
    <Page>
      <GlobalStyle />
      <TitleBar>
        <Brand>
          <svg width="4" height="8"><path d="M4 0v8H0z" fill="#e8742a" /></svg>
          MetaStock
        </Brand>
        <DocTitle>{"[S&P 500 Nova Maquineta.mwc - [.SPX] S&P 500 INDEX (Trade Price)]   4,074.61 (+5.56006)"}</DocTitle>
        <TitleRight>
          <span>Hourly</span>
          <WinButtons>
            {["Minimize", "Maximize", "Close"].map((n) => (
              <WinButton key={n} aria-label={n}><Ic s={7}>{winGlyph[n]}</Ic></WinButton>
            ))}
          </WinButtons>
        </TitleRight>
      </TitleBar>
      <MenuBar>
        {["File", "Edit", "View", "Insert", "Format", "Tools", "Window", "Help"].map((m) => (
          <MenuItem key={m}>{m}</MenuItem>
        ))}
        <Grow />
        <WinButtons $light>
          {["Minimize", "Restore", "Close"].map((n) => (
            <WinButton key={n} $small aria-label={`${n} chart`}><Ic s={6}>{winGlyph[n]}</Ic></WinButton>
          ))}
        </WinButtons>
      </MenuBar>
      <TopToolbar />
      <Workspace>
        <SideTools />
        <Main>
          <TrendPane />
          <AltPane />
          <OscPane />
          <PricePane />
          <ScrollStrip>
            <Thumb />
            <NavButton $rule aria-label="Refresh"><RefreshCw size={9} strokeWidth={3} /></NavButton>
            <NavButton aria-label="Bar width"><Ic s={7}><path d="M8 2v12" strokeWidth="3" /></Ic></NavButton>
            <NavButton $rule aria-label="Fit height"><MoveVertical size={9} strokeWidth={3} /></NavButton>
            <NavButton aria-label="Move"><Move size={9} strokeWidth={3} /></NavButton>
            <NavButton aria-label="Zoom out"><CircleMinus size={9} /></NavButton>
            <NavButton aria-label="Zoom in"><CirclePlus size={9} /></NavButton>
            <NavButton $rule $off aria-label="Scroll left"><Ic s={5}><path d="M12 1v14L3 8z" fill="currentColor" /></Ic></NavButton>
            <NavButton $off aria-label="Scroll right"><Ic s={5}><path d="M4 1v14l9-7z" fill="currentColor" /></Ic></NavButton>
            <NavButton aria-label="Data table"><Table2 size={9} /></NavButton>
          </ScrollStrip>
        </Main>
      </Workspace>
      <DrawingBar />
      <Taskbar />
    </Page>
  );
}
